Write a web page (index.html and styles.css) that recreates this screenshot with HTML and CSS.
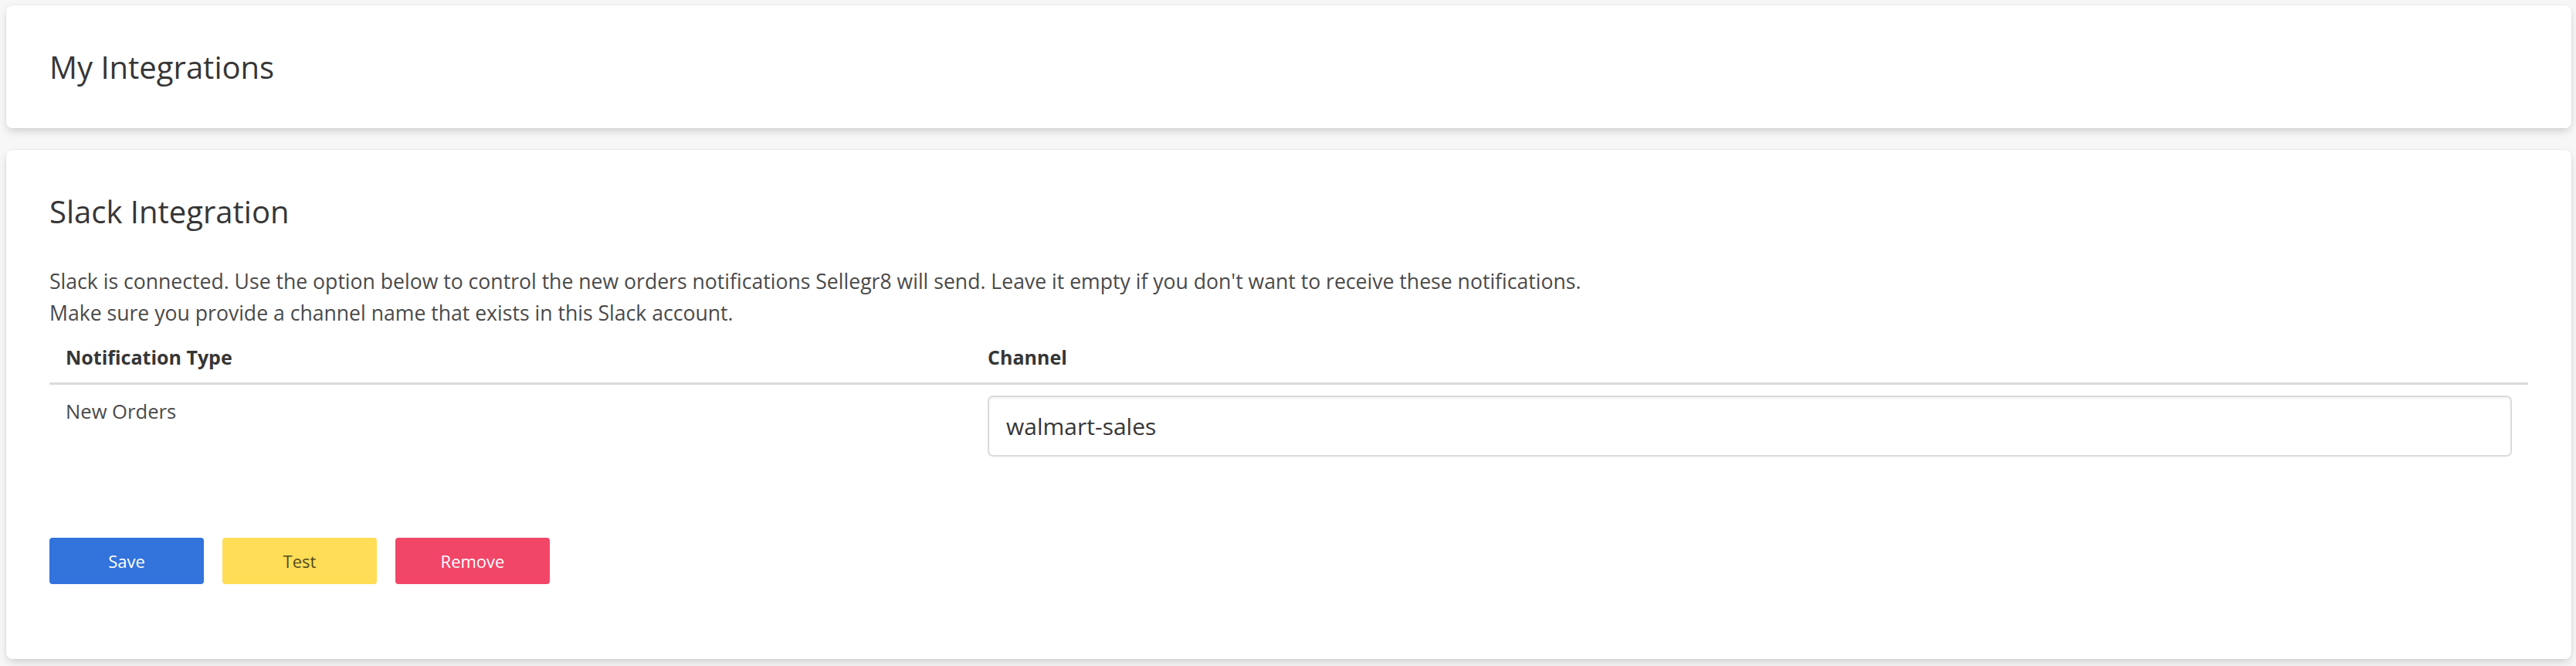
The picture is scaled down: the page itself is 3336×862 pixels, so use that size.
FILE: index.html
```html
<!DOCTYPE html>
<html lang="en">
<head>
  <meta charset="UTF-8">
  <meta name="viewport" content="width=device-width, initial-scale=1">
  <title>My Integrations</title>
  <link rel="stylesheet" href="styles.css">
</head>
<body>
  <div class="box page-head">
    <h1 class="title">My Integrations</h1>
  </div>

  <div class="box">
    <h2 class="title">Slack Integration</h2>
    <p class="intro">
      Slack is connected. Use the option below to control the new orders notifications Sellegr8 will send. Leave it empty if you don't want to receive these notifications.<br>
      Make sure you provide a channel name that exists in this Slack account.
    </p>

    <table class="table">
      <thead>
        <tr>
          <th class="col-type">Notification Type</th>
          <th>Channel</th>
        </tr>
      </thead>
      <tbody>
        <tr>
          <td>New Orders</td>
          <td><input class="input" type="text" value="walmart-sales"></td>
        </tr>
      </tbody>
    </table>

    <div class="buttons">
      <button class="button is-link">Save</button>
      <button class="button is-warning">Test</button>
      <button class="button is-danger">Remove</button>
    </div>
  </div>
</body>
</html>
```

FILE: styles.css
```css
body {
  font-family: "Open Sans", "Noto Sans", sans-serif;
  background: #f7f7f7;
  color: #4a4a4a;
  margin: 0;
  padding: 7px 6px 7px 8px;
}

.box {
  background: #fff;
  border-radius: 8px;
  box-shadow: 0 5px 12px -2px rgba(10,10,10,0.18), 0 0 0 1px rgba(10,10,10,0.03);
  padding: 57px 56px;
  margin-bottom: 28px;
}

.title {
  font-size: 40px;
  font-weight: 400;
  line-height: 45px;
  color: #363636;
  margin: 0;
}

.intro {
  font-size: 26.6px;
  line-height: 41px;
  margin: 48px 0 0;
}

.table {
  width: 100%;
  border-collapse: collapse;
  font-size: 25px;
  line-height: 41px;
  color: #4a4a4a;
}
.table th {
  text-align: left;
  font-weight: 700;
  color: #363636;
  padding: 16px 21px 12px;
  border-bottom: 3px solid #dbdbdb;
}
.table td {
  vertical-align: top;
  padding: 14px 21px;
  font-size: 25.6px;
}
.col-type {
  width: 37.2%;
}

.input {
  box-sizing: border-box;
  width: 100%;
  height: 79px;
  padding: 0 22px;
  font-family: inherit;
  font-size: 30px;
  color: #363636;
  border: 2px solid #dbdbdb;
  border-radius: 7px;
  box-shadow: inset 0 2px 3px rgba(10,10,10,0.05);
  outline: none;
}

.buttons {
  display: flex;
  gap: 24px;
  margin: 91px 0 40px;
}
.button {
  width: 200px;
  height: 60px;
  border: none;
  border-radius: 4px;
  font-family: inherit;
  font-size: 22px;
  color: #fff;
  cursor: pointer;
}
.button.is-link {
  background: #3273dc;
}
.button.is-warning {
  background: #ffdd57;
  color: rgba(0,0,0,0.7);
}
.button.is-danger {
  background: #f14668;
}
```
